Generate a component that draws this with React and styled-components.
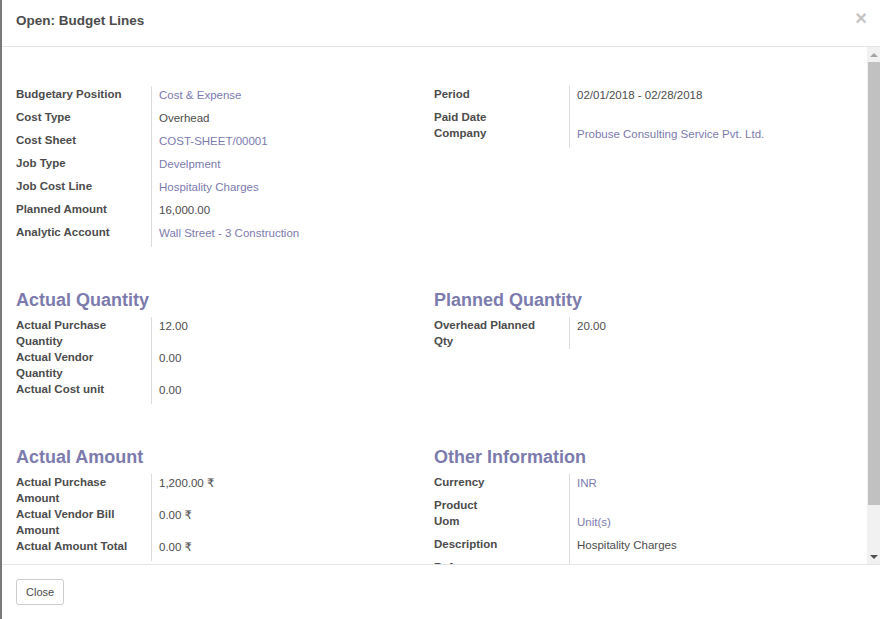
import React from 'react';
import styled, { createGlobalStyle } from 'styled-components';

const GlobalStyle = createGlobalStyle`
  html, body {
    margin: 0;
    padding: 0;
    height: 100%;
    background: #fff;
  }
  #root {
    height: 100%;
  }
  * {
    box-sizing: border-box;
  }
`;

// left column and right column of every group row
const groups = [
  {
    left: {
      rows: [
        { label: 'Budgetary Position', value: 'Cost & Expense', link: true },
        { label: 'Cost Type', value: 'Overhead' },
        { label: 'Cost Sheet', value: 'COST-SHEET/00001', link: true },
        { label: 'Job Type', value: 'Develpment', link: true },
        { label: 'Job Cost Line', value: 'Hospitality Charges', link: true },
        { label: 'Planned Amount', value: '16,000.00' },
        { label: 'Analytic Account', value: 'Wall Street - 3 Construction', link: true },
      ],
    },
    right: {
      rows: [
        { label: 'Period', value: '02/01/2018 - 02/28/2018' },
        { label: 'Paid Date', value: '' },
        { label: 'Company', value: 'Probuse Consulting Service Pvt. Ltd.', link: true },
      ],
    },
  },
  {
    left: {
      title: 'Actual Quantity',
      rows: [
        { label: 'Actual Purchase Quantity', value: '12.00' },
        { label: 'Actual Vendor Quantity', value: '0.00' },
        { label: 'Actual Cost unit', value: '0.00' },
      ],
    },
    right: {
      title: 'Planned Quantity',
      rows: [{ label: 'Overhead Planned Qty', value: '20.00' }],
    },
  },
  {
    left: {
      title: 'Actual Amount',
      rows: [
        { label: 'Actual Purchase Amount', value: '1,200.00 ₹' },
        { label: 'Actual Vendor Bill Amount', value: '0.00 ₹' },
        { label: 'Actual Amount Total', value: '0.00 ₹' },
      ],
    },
    right: {
      title: 'Other Information',
      rows: [
        { label: 'Currency', value: 'INR', link: true },
        { label: 'Product', value: '' },
        { label: 'Uom', value: 'Unit(s)', link: true },
        { label: 'Description', value: 'Hospitality Charges' },
        { label: 'Reference', value: '' },
      ],
    },
  },
];

const Group = ({ title, rows }) => (
  <GroupBox>
    {title && <GroupTitle>{title}</GroupTitle>}
    <FieldTable>
      {rows.map((row) => (
        <React.Fragment key={row.label}>
          <Label>{row.label}</Label>
          <Value $link={row.link} $empty={!row.value}>{row.value}</Value>
        </React.Fragment>
      ))}
    </FieldTable>
  </GroupBox>
);

// the modal body's scrollbar, drawn as it shows at the top of the scroll
const ScrollBar = () => (
  <Scroll>
    <Arrow>
      <Tri $up />
    </Arrow>
    <Track>
      <Thumb />
    </Track>
    <Arrow>
      <Tri />
    </Arrow>
  </Scroll>
);

const App = () => (
  <>
    <GlobalStyle />
    <Dialog>
      <Header>
        <Title>Open: Budget Lines</Title>
        <CloseX>×</CloseX>
      </Header>
      <Body>
        <Content>
          <Sheet>
            {groups.map((g, i) => (
              <React.Fragment key={i}>
                <Group {...g.left} />
                <Group {...g.right} />
              </React.Fragment>
            ))}
          </Sheet>
        </Content>
        <ScrollBar />
      </Body>
      <Footer>
        <Button type="button">Close</Button>
      </Footer>
    </Dialog>
  </>
);

const Dialog = styled.div`
  height: 619px;
  display: flex;
  flex-direction: column;
  border-left: 2px solid #7a7a7a;
  font-family: "Liberation Sans", Arial, "DejaVu Sans", sans-serif;
  color: #4c4c4c;
  background: #fff;
`;

const Header = styled.div`
  flex: none;
  height: 47px;
  display: flex;
  align-items: flex-start;
  justify-content: space-between;
  padding: 13px 13px 0 14px;
  border-bottom: 1px solid #e5e5e5;
`;

const Title = styled.h4`
  margin: 0;
  font-size: 13.5px;
  line-height: 16px;
  font-weight: bold;
  color: #4c4c4c;
`;

const CloseX = styled.span`
  font-size: 20px;
  line-height: 10px;
  font-weight: bold;
  color: #c4c4c4;
`;

const Body = styled.div`
  flex: 1;
  min-height: 0;
  display: flex;
`;

const Content = styled.div`
  flex: 1;
  min-width: 0;
  overflow: hidden;
`;

const Scroll = styled.div`
  flex: none;
  width: 13px;
  display: flex;
  flex-direction: column;
  background: #f1f1f1;
`;

const Arrow = styled.div`
  flex: none;
  height: 15px;
  display: flex;
  align-items: center;
  justify-content: center;
`;

const Tri = styled.span`
  width: 0;
  height: 0;
  border-left: 4px solid transparent;
  border-right: 4px solid transparent;
  ${(p) => (p.$up
    ? 'border-bottom: 4px solid #a3a3a3;'
    : 'border-top: 4px solid #505050;')}
`;

const Track = styled.div`
  flex: 1;
  display: flex;
  flex-direction: column;
`;

const Thumb = styled.div`
  height: 443px;
  margin-left: 1px;
  background: #c1c1c1;
`;

const Sheet = styled.div`
  display: grid;
  grid-template-columns: 1fr 1fr;
  row-gap: 43px;
  align-items: start;
  padding: 39px 15px 33px 14px;
`;

const GroupBox = styled.div`
  display: flex;
  flex-direction: column;
`;

const GroupTitle = styled.h2`
  margin: 0 0 7px;
  font-size: 18px;
  line-height: 20px;
  font-weight: bold;
  color: #7c7bad;
`;

const FieldTable = styled.div`
  display: grid;
  grid-template-columns: 135px 1fr;
  font-size: 11.5px;
  line-height: 16px;
`;

const Label = styled.div`
  font-weight: bold;
  padding-right: 15px;
  color: #4c4c4c;
`;

const Value = styled.div`
  border-left: 1px solid #dcdcdc;
  padding: ${(p) => (p.$empty ? '0 0 0 7px' : '1px 0 6px 7px')};
  color: ${(p) => (p.$link ? '#7c7bad' : '#4c4c4c')};
`;

const Footer = styled.div`
  flex: none;
  border-top: 1px solid #e5e5e5;
  padding: 14px;
  display: flex;
`;

const Button = styled.button`
  height: 26px;
  padding: 0 9px;
  font-family: inherit;
  font-size: 11px;
  color: #4c4c4c;
  background: #fff;
  border: 1px solid #cccccc;
  border-radius: 3px;
`;

export default App;
